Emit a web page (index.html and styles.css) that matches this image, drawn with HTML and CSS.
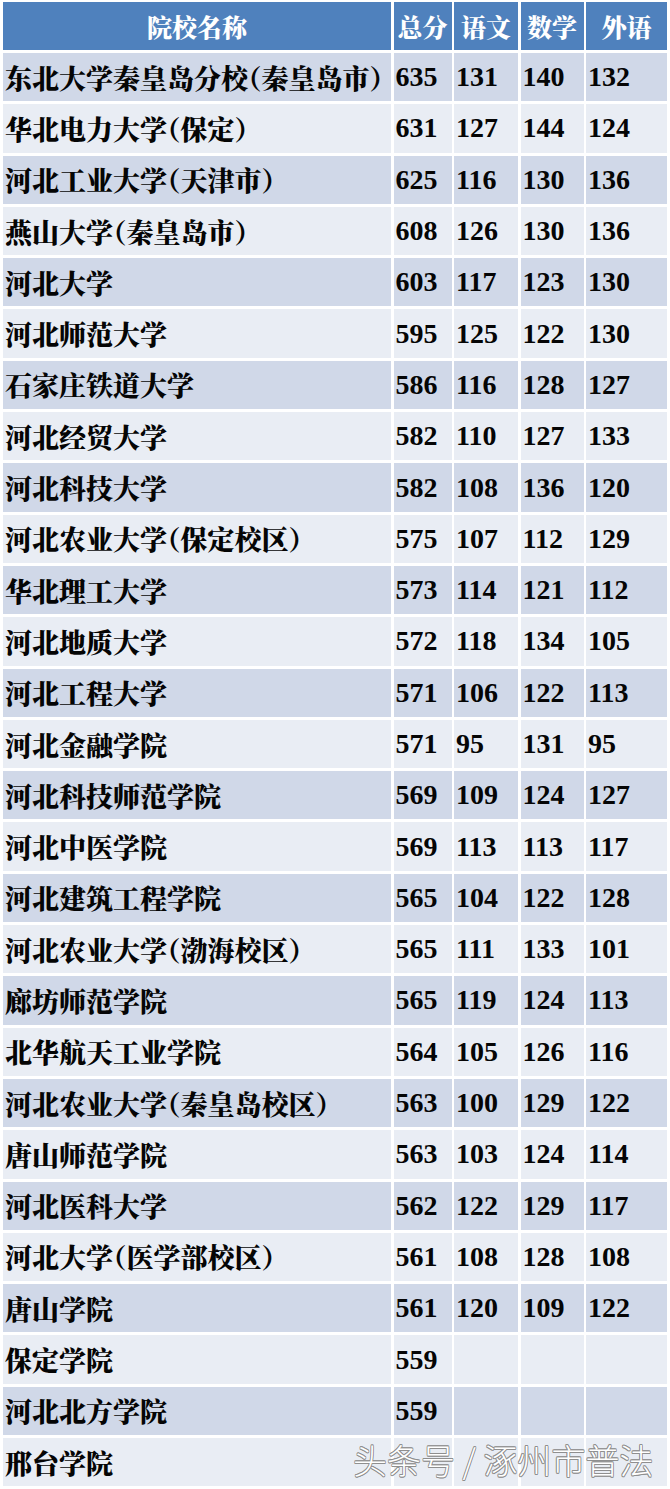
FILE: index.html
```html
<!DOCTYPE html>
<html lang="zh-CN">
<head>
<meta charset="utf-8">
<title>院校分数</title>
<link rel="stylesheet" href="styles.css">
</head>
<body>
<div class="page">
  <div class="table">
    <div class="row head">
      <div class="cell name">院校名称</div>
      <div class="cell">总分</div>
      <div class="cell">语文</div>
      <div class="cell">数学</div>
      <div class="cell">外语</div>
    </div>
    <div class="row dark"><div class="cell name">东北大学秦皇岛分校（秦皇岛市）</div><div class="cell">635</div><div class="cell">131</div><div class="cell">140</div><div class="cell">132</div></div>
    <div class="row light"><div class="cell name">华北电力大学（保定）</div><div class="cell">631</div><div class="cell">127</div><div class="cell">144</div><div class="cell">124</div></div>
    <div class="row dark"><div class="cell name">河北工业大学（天津市）</div><div class="cell">625</div><div class="cell">116</div><div class="cell">130</div><div class="cell">136</div></div>
    <div class="row light"><div class="cell name">燕山大学（秦皇岛市）</div><div class="cell">608</div><div class="cell">126</div><div class="cell">130</div><div class="cell">136</div></div>
    <div class="row dark"><div class="cell name">河北大学</div><div class="cell">603</div><div class="cell">117</div><div class="cell">123</div><div class="cell">130</div></div>
    <div class="row light"><div class="cell name">河北师范大学</div><div class="cell">595</div><div class="cell">125</div><div class="cell">122</div><div class="cell">130</div></div>
    <div class="row dark"><div class="cell name">石家庄铁道大学</div><div class="cell">586</div><div class="cell">116</div><div class="cell">128</div><div class="cell">127</div></div>
    <div class="row light"><div class="cell name">河北经贸大学</div><div class="cell">582</div><div class="cell">110</div><div class="cell">127</div><div class="cell">133</div></div>
    <div class="row dark"><div class="cell name">河北科技大学</div><div class="cell">582</div><div class="cell">108</div><div class="cell">136</div><div class="cell">120</div></div>
    <div class="row light"><div class="cell name">河北农业大学（保定校区）</div><div class="cell">575</div><div class="cell">107</div><div class="cell">112</div><div class="cell">129</div></div>
    <div class="row dark"><div class="cell name">华北理工大学</div><div class="cell">573</div><div class="cell">114</div><div class="cell">121</div><div class="cell">112</div></div>
    <div class="row light"><div class="cell name">河北地质大学</div><div class="cell">572</div><div class="cell">118</div><div class="cell">134</div><div class="cell">105</div></div>
    <div class="row dark"><div class="cell name">河北工程大学</div><div class="cell">571</div><div class="cell">106</div><div class="cell">122</div><div class="cell">113</div></div>
    <div class="row light"><div class="cell name">河北金融学院</div><div class="cell">571</div><div class="cell">95</div><div class="cell">131</div><div class="cell">95</div></div>
    <div class="row dark"><div class="cell name">河北科技师范学院</div><div class="cell">569</div><div class="cell">109</div><div class="cell">124</div><div class="cell">127</div></div>
    <div class="row light"><div class="cell name">河北中医学院</div><div class="cell">569</div><div class="cell">113</div><div class="cell">113</div><div class="cell">117</div></div>
    <div class="row dark"><div class="cell name">河北建筑工程学院</div><div class="cell">565</div><div class="cell">104</div><div class="cell">122</div><div class="cell">128</div></div>
    <div class="row light"><div class="cell name">河北农业大学（渤海校区）</div><div class="cell">565</div><div class="cell">111</div><div class="cell">133</div><div class="cell">101</div></div>
    <div class="row dark"><div class="cell name">廊坊师范学院</div><div class="cell">565</div><div class="cell">119</div><div class="cell">124</div><div class="cell">113</div></div>
    <div class="row light"><div class="cell name">北华航天工业学院</div><div class="cell">564</div><div class="cell">105</div><div class="cell">126</div><div class="cell">116</div></div>
    <div class="row dark"><div class="cell name">河北农业大学（秦皇岛校区）</div><div class="cell">563</div><div class="cell">100</div><div class="cell">129</div><div class="cell">122</div></div>
    <div class="row light"><div class="cell name">唐山师范学院</div><div class="cell">563</div><div class="cell">103</div><div class="cell">124</div><div class="cell">114</div></div>
    <div class="row dark"><div class="cell name">河北医科大学</div><div class="cell">562</div><div class="cell">122</div><div class="cell">129</div><div class="cell">117</div></div>
    <div class="row light"><div class="cell name">河北大学（医学部校区）</div><div class="cell">561</div><div class="cell">108</div><div class="cell">128</div><div class="cell">108</div></div>
    <div class="row dark"><div class="cell name">唐山学院</div><div class="cell">561</div><div class="cell">120</div><div class="cell">109</div><div class="cell">122</div></div>
    <div class="row light"><div class="cell name">保定学院</div><div class="cell">559</div><div class="cell"></div><div class="cell"></div><div class="cell"></div></div>
    <div class="row dark"><div class="cell name">河北北方学院</div><div class="cell">559</div><div class="cell"></div><div class="cell"></div><div class="cell"></div></div>
    <div class="row light last"><div class="cell name">邢台学院</div><div class="cell"></div><div class="cell"></div><div class="cell"></div><div class="cell"></div>
      <div class="watermark">头条号 / 涿州市普法</div>
    </div>
  </div>
</div>
</body>
</html>
```

FILE: styles.css
```css
html, body {
  margin: 0;
  padding: 0;
  background: #ffffff;
}

.page {
  width: 670px;
  height: 1489px;
  overflow: hidden;
}

.table {
  display: flex;
  flex-direction: column;
  gap: 3px;
  margin: 2px 0 0 3px;
  width: 665px;
}

.row {
  display: grid;
  grid-template-columns: 388px 58px 64px 63px 81px;
  column-gap: 2.5px;
  height: 48.3px;
}

.head {
  height: 48px;
}

.cell {
  display: flex;
  align-items: center;
  padding-left: 2px;
  font-family: "Liberation Serif", "Noto Serif CJK SC", "Noto Sans CJK SC", serif;
  font-weight: 700;
  font-size: 28px;
  color: #050505;
  white-space: nowrap;
  overflow: hidden;
}

.name {
  font-size: 27px;
  font-weight: 900;
  font-feature-settings: "halt" 1;
  letter-spacing: 0;
}

.head .cell {
  background: #4f81bd;
  color: #ffffff;
  justify-content: center;
  padding-left: 0;
  font-family: "Noto Serif CJK SC", "Noto Sans CJK SC", serif;
  font-size: 25px;
  font-weight: 900;
}

.dark .cell {
  background: #d0d8e8;
}

.light .cell {
  background: #e9edf4;
}

.last {
  position: relative;
}

.watermark {
  position: absolute;
  left: 350px;
  top: -3px;
  height: 48px;
  display: flex;
  align-items: center;
  font-family: "Noto Sans CJK SC", sans-serif;
  font-weight: 300;
  font-size: 34px;
  color: #ffffff;
  text-shadow: 0.8px 0 0 #8f8f8f, -0.8px 0 0 #8f8f8f, 0 0.8px 0 #8f8f8f, 0 -0.8px 0 #8f8f8f, 0.6px 0.6px 0 #8f8f8f, -0.6px -0.6px 0 #8f8f8f, 0.6px -0.6px 0 #8f8f8f, -0.6px 0.6px 0 #8f8f8f;
  white-space: pre;
}
```
